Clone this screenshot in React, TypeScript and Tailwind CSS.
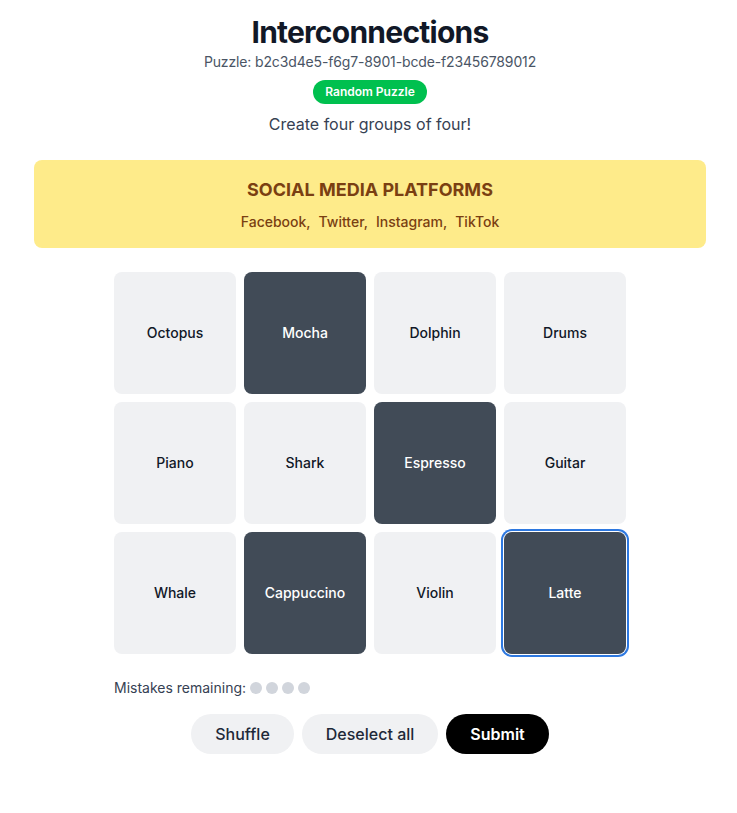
const words = [
  'Octopus', 'Mocha', 'Dolphin', 'Drums',
  'Piano', 'Shark', 'Espresso', 'Guitar',
  'Whale', 'Cappuccino', 'Violin', 'Latte',
]

const selected = ['Mocha', 'Espresso', 'Cappuccino', 'Latte']

export default function App() {
  return (
    <div className="min-h-screen bg-white pl-[3px] font-['Inter',sans-serif] text-gray-900">
      <div className="mx-auto flex max-w-2xl flex-col items-center pt-[14px] pb-8">
        <h1 className="text-3xl font-bold tracking-tight text-[#111827]">Interconnections</h1>
        <div className="mt-0.5 text-sm tracking-[-0.01em] text-gray-600">Puzzle: b2c3d4e5-f6g7-8901-bcde-f23456789012</div>
        <button type="button" className="mt-2 rounded-full bg-[#00c04f] px-3 py-1 text-xs font-semibold text-white">
          Random Puzzle
        </button>
        <p className="mt-2 text-base text-gray-700">Create four groups of four!</p>

        <div className="mt-6 w-full rounded-lg bg-[#feeb8a] p-4 text-center text-[#7a3f12]">
          <div className="text-lg font-bold">SOCIAL MEDIA PLATFORMS</div>
          <div className="mt-2 flex justify-center gap-2 text-sm font-medium">
            <span>Facebook,</span>
            <span>Twitter,</span>
            <span>Instagram,</span>
            <span>TikTok</span>
          </div>
        </div>

        <div className="mt-6 grid w-[512px] grid-cols-4 gap-2">
          {words.map((w) => {
            const on = selected.includes(w)
            return (
              <button
                key={w}
                type="button"
                className={
                  on
                    ? 'flex aspect-square items-center justify-center rounded-lg bg-[#414b57] text-sm font-medium text-white'
                    : 'flex aspect-square items-center justify-center rounded-lg bg-[#f0f1f3] text-sm font-medium text-[#111827]'
                }
                style={w === 'Latte' ? { boxShadow: '0 0 0 1px #fff, 0 0 0 3px #2d78e0' } : undefined}
              >
                {w}
              </button>
            )
          })}
        </div>

        <div className="mt-6 flex w-[512px] items-center gap-1 text-sm text-gray-700">
          <span>Mistakes remaining:</span>
          <span className="size-3 rounded-full bg-gray-300" />
          <span className="size-3 rounded-full bg-gray-300" />
          <span className="size-3 rounded-full bg-gray-300" />
          <span className="size-3 rounded-full bg-gray-300" />
        </div>

        <div className="mt-4 flex gap-2">
          <button type="button" className="h-10 rounded-full bg-[#f0f1f3] px-6 text-base font-medium text-gray-800">Shuffle</button>
          <button type="button" className="h-10 rounded-full bg-[#f0f1f3] px-6 text-base font-medium text-gray-800">Deselect all</button>
          <button type="button" className="h-10 rounded-full bg-black px-6 text-base font-semibold text-white">Submit</button>
        </div>
      </div>
    </div>
  )
}
